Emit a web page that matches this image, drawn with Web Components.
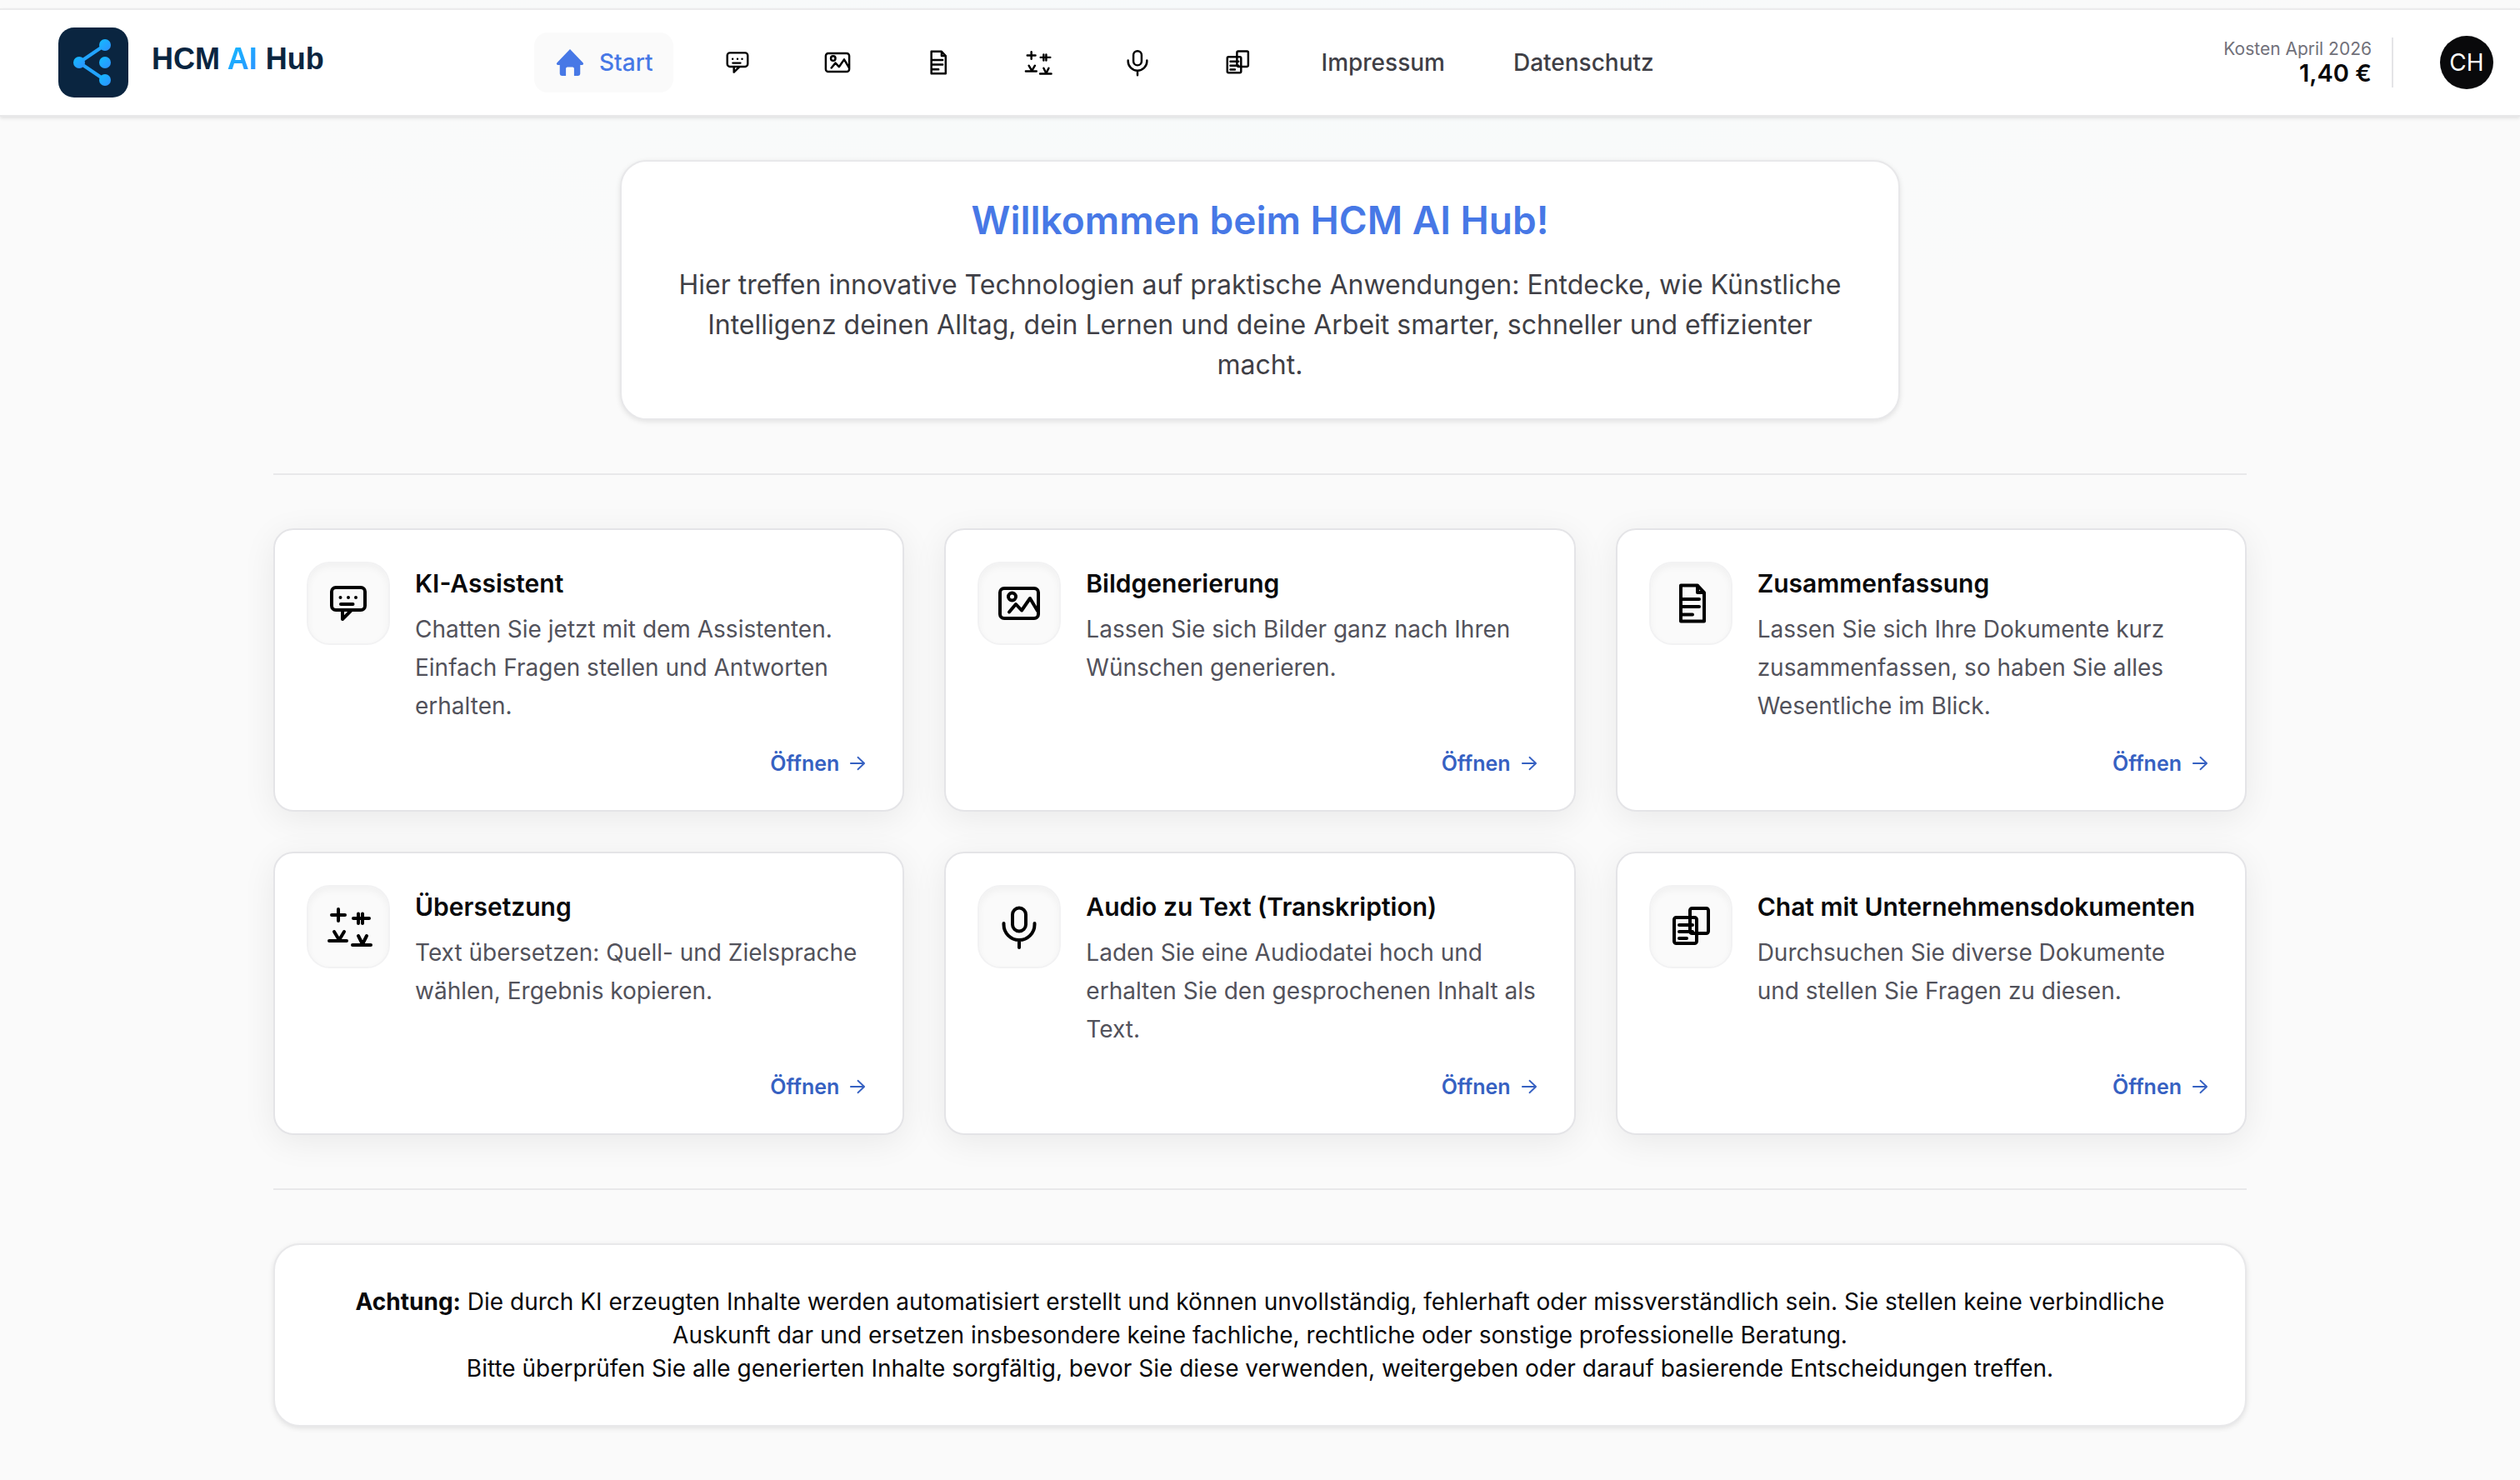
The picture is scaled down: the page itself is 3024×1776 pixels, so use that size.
<!DOCTYPE html>
<html lang="de">
<head>
<meta charset="utf-8">
<title>HCM AI Hub</title>
<style>
  body {
    margin: 0;
    min-height: 100vh;
    box-sizing: border-box;
    padding-top: 10px;
    background: radial-gradient(ellipse 1300px 420px at 50% 0, #f7fafb 0%, #f8fafa 50%, #fafafa 100%) no-repeat #fafafa;
    color: #09090b;
    font-family: Inter, "Liberation Sans", sans-serif;
    font-size: 28px;
  }
</style>
</head>
<body>
<hub-header></hub-header>
<hub-main>
  <hub-welcome>
    <span slot="title">Willkommen beim HCM AI Hub!</span>
    Hier treffen innovative Technologien auf praktische Anwendungen: Entdecke, wie Künstliche Intelligenz deinen Alltag, dein Lernen und deine Arbeit smarter, schneller und effizienter macht.
  </hub-welcome>
  <hub-divider></hub-divider>
  <hub-grid>
    <hub-card icon="chat"><span slot="title">KI-Assistent</span>Chatten Sie jetzt mit dem Assistenten. Einfach Fragen stellen und Antworten erhalten.</hub-card>
    <hub-card icon="image"><span slot="title">Bildgenerierung</span>Lassen Sie sich Bilder ganz nach Ihren Wünschen generieren.</hub-card>
    <hub-card icon="doc"><span slot="title">Zusammenfassung</span>Lassen Sie sich Ihre Dokumente kurz zusammenfassen, so haben Sie alles Wesentliche im Blick.</hub-card>
    <hub-card icon="translate"><span slot="title">Übersetzung</span>Text übersetzen: Quell- und Zielsprache wählen, Ergebnis kopieren.</hub-card>
    <hub-card icon="mic"><span slot="title">Audio zu Text (Transkription)</span>Laden Sie eine Audiodatei hoch und erhalten Sie den gesprochenen Inhalt als Text.</hub-card>
    <hub-card icon="docs"><span slot="title">Chat mit Unternehmensdokumenten</span>Durchsuchen Sie diverse Dokumente und stellen Sie Fragen zu diesen.</hub-card>
  </hub-grid>
  <hub-divider></hub-divider>
  <hub-notice><strong>Achtung:</strong> Die durch KI erzeugten Inhalte werden automatisiert erstellt und können unvollständig, fehlerhaft oder missverständlich sein. Sie stellen keine verbindliche Auskunft dar und ersetzen insbesondere keine fachliche, rechtliche oder sonstige professionelle Beratung.<br>Bitte überprüfen Sie alle generierten Inhalte sorgfältig, bevor Sie diese verwenden, weitergeben oder darauf basierende Entscheidungen treffen.</hub-notice>
</hub-main>

<script>
const ICONS = {
  home: '<path fill="currentColor" stroke="none" d="M0-26 L25 0 Q28 3 24 5 H20 V22 Q20 26 16 26 H8 V12 Q8 9 5 9 H-5 Q-8 9-8 12 V26 H-16 Q-20 26-20 22 V5 H-24 Q-28 3-25 0 Z"/>',
  chat: '<rect x="-20" y="-19" width="40" height="27" rx="5"/><path d="M-7 9 V19 L3 9"/><path d="M-9 1 H5.500"/><g fill="currentColor" stroke="none"><circle cx="-9.500" cy="-7" r="2"/><circle cx="0" cy="-7" r="2"/><circle cx="9" cy="-7" r="2"/></g>',
  image: '<rect x="-23" y="-18" width="46" height="36" rx="5"/><circle cx="-8.500" cy="-8" r="4.500"/><path d="M-12 10.500 L-4 1 L3 8.500 L13-6 L22 9"/>',
  doc: '<path d="M-12-21.500 H8 L16-13 V21.500 H-12 Z"/><path d="M8-21 V-13 H15"/><path d="M-11-5 H10 M-11 4 H10 M-11 13.500 H2"/>',
  translate: '<path d="M-20-14 H-4 M-12-21 V-7 M6-10 H25 M12-15.500 V-4 M17-15.500 V-4"/><path d="M-23 17 H-2 M-17 6 L-11 16 L-5 6 M5 22 H27 M12 11 L17 21 L22 11"/>',
  mic: '<rect x="-8" y="-22.500" width="16" height="28" rx="8"/><path d="M-18.500-4 V-2.500 A18.500 18.500 0 0 0 18.500-2.500 V-4 M0 17 V25"/>',
  docs: '<rect x="-20" y="-11" width="27" height="31" rx="2.500"/><rect x="-1" y="-22" width="22" height="30" rx="2.500"/><path d="M-14-2 H2 M-14 6 H2 M-14 14 H-5"/>',
  arrow: '<path d="M-18 0 H17 M1-16 L18 0 L1 16"/>'
};

function define(name, css, html) {
  customElements.define(name, class extends HTMLElement {
    connectedCallback() {
      if (this.shadowRoot) return;
      const body = typeof html === 'function' ? html(this) : html;
      this.attachShadow({ mode: 'open' }).innerHTML = `<style>*{box-sizing:border-box}${css}</style>${body}`;
    }
  });
}

define('hub-icon',
  ':host{display:block;flex:none;width:38px;height:38px}svg{display:block;width:100%;height:100%;overflow:visible}',
  el => `<svg viewBox="-31 -31 62 62" fill="none" stroke="currentColor" stroke-width="4" stroke-linecap="round" stroke-linejoin="round" aria-hidden="true">${ICONS[el.getAttribute('name')]}</svg>`);

define('hub-nav-link', `
  :host{display:block}
  a{display:flex;align-items:center;gap:16px;height:72px;padding:0 24px;border-radius:16px;color:#3f3f46;font-weight:500;text-decoration:none}
  hub-icon{color:#000}
  :host([active]) a{background:#fafafa;color:#4778e6}
  :host([active]) hub-icon{color:inherit}`,
  el => {
    const icon = el.getAttribute('icon');
    const label = el.getAttribute('label');
    return `<a href="#"${label ? ` aria-label="${label}"` : ''}>${icon ? `<hub-icon name="${icon}"></hub-icon>` : ''}<slot></slot></a>`;
  });

define('hub-logo', `
  :host{display:block}
  a{display:flex;align-items:center;gap:28px;color:#0a2540;text-decoration:none}
  svg{display:block;width:84px;height:84px}
  .name{font:700 36px/42px "Liberation Sans",Arial,sans-serif;padding-bottom:8px}
  .name span{color:#1fa9ff;background:linear-gradient(135deg,#12bdff,#2f8fff);-webkit-background-clip:text;background-clip:text;-webkit-text-fill-color:transparent}`, `
  <a href="#">
    <svg viewBox="0 0 84 84" aria-hidden="true">
      <defs><linearGradient id="g" x1="0" y1="0" x2="1" y2="1"><stop offset="0" stop-color="#12bdff"/><stop offset="1" stop-color="#2f8fff"/></linearGradient></defs>
      <rect width="84" height="84" rx="19" fill="#0a2540"/>
      <path d="M25 42 L56 21 M25 42 L56 63" stroke="#22a4ff" stroke-width="4"/>
      <circle cx="25" cy="42" r="7" fill="url(#g)"/><circle cx="56" cy="21" r="7" fill="url(#g)"/><circle cx="56" cy="42" r="7" fill="url(#g)"/><circle cx="56" cy="63" r="7" fill="url(#g)"/>
    </svg>
    <div class="name">HCM <span>AI</span> Hub</div>
  </a>`);

define('hub-header', `
  :host{display:block}
  header{display:flex;align-items:center;height:130px;padding:0 32px 0 70px;background:#fff;border-top:2px solid #ebebec;border-bottom:2px solid #e8e8e9;box-shadow:0 2px 4px rgba(0,0,0,.1)}
  hub-logo{width:571px}
  nav{display:flex;gap:34px;flex:1}
  .costs{display:flex;flex-direction:column;justify-content:center;height:60px;padding:0 24px 2px 0;border-right:2px solid #e4e4e7;text-align:right;font-size:29px;line-height:30px;font-weight:600}
  .costs small{font-size:21px;line-height:28px;font-weight:400;color:#71717a}
  button{width:64px;height:64px;margin-left:56px;padding:0;border:0;border-radius:50%;background:#09090b;color:#fff;font:400 28px/64px Inter,"Liberation Sans",sans-serif}`, `
  <header>
    <hub-logo></hub-logo>
    <nav>
      <hub-nav-link icon="home" active>Start</hub-nav-link>
      <hub-nav-link icon="chat" label="KI-Assistent"></hub-nav-link>
      <hub-nav-link icon="image" label="Bildgenerierung"></hub-nav-link>
      <hub-nav-link icon="doc" label="Zusammenfassung"></hub-nav-link>
      <hub-nav-link icon="translate" label="Übersetzung"></hub-nav-link>
      <hub-nav-link icon="mic" label="Transkription"></hub-nav-link>
      <hub-nav-link icon="docs" label="Unternehmensdokumente"></hub-nav-link>
      <hub-nav-link>Impressum</hub-nav-link>
      <hub-nav-link>Datenschutz</hub-nav-link>
    </nav>
    <div class="costs"><small>Kosten April 2026</small><span>1,40 €</span></div>
    <button type="button">CH</button>
  </header>`);

define('hub-main', `
  :host{display:block}
  main{display:flex;flex-direction:column;gap:64px;max-width:2368px;margin:0 auto;padding:52px 0 62px}`,
  '<main><slot></slot></main>');

define('hub-divider',
  ':host{display:block}hr{margin:0;border:0;height:2px;background:#e8e8ea}', '<hr>');

define('hub-welcome', `
  :host{display:block;align-self:center;width:100%;max-width:1536px}
  section{padding:40px 64px;border:2px solid #e8e8ea;border-radius:32px;background:#fff;box-shadow:0 2px 6px rgba(0,0,0,.1);text-align:center}
  h1{margin:0 0 24px;font-size:46px;line-height:60px;font-weight:600;color:#4778e6}
  p{margin:0;font-size:32px;line-height:48px;color:#3f3f46}`,
  '<section><h1><slot name="title"></slot></h1><p><slot></slot></p></section>');

define('hub-grid',
  ':host{display:grid;grid-template-columns:repeat(3,minmax(0,1fr));grid-auto-rows:1fr;gap:48px}', '<slot></slot>');

define('hub-card', `
  :host{display:block}
  article{display:flex;gap:30px;height:100%;padding:38px;border:2px solid #e4e4e7;border-radius:24px;background:#fff;box-shadow:0 8px 40px rgba(0,0,0,.07)}
  .tile{display:flex;align-items:center;justify-content:center;flex:none;width:100px;height:100px;border:2px solid #f2f2f3;border-radius:28px;background:#fafafa;box-shadow:inset 0 4px 8px rgba(0,0,0,.04);color:#000}
  .tile hub-icon{width:62px;height:62px}
  .text{display:flex;flex-direction:column;flex:1;min-width:0;padding:6px 2px 0 0}
  h2{margin:0 0 12px;font-size:30px;line-height:40px;font-weight:600}
  p{margin:0 0 28px;font-size:28px;line-height:46px;color:#52525b}
  a{display:flex;align-items:center;gap:8px;align-self:flex-end;margin-top:auto;font-size:25px;line-height:36px;font-weight:600;color:#3661c2;text-decoration:none}
  a hub-icon{width:28px;height:28px}`,
  el => `<article><div class="tile"><hub-icon name="${el.getAttribute('icon')}"></hub-icon></div><div class="text"><h2><slot name="title"></slot></h2><p><slot></slot></p><a href="#">Öffnen<hub-icon name="arrow"></hub-icon></a></div></article>`);

define('hub-notice', `
  :host{display:block}
  aside{padding:48px 64px;border:2px solid #e8e8ea;border-radius:32px;background:#fff;box-shadow:0 2px 6px rgba(0,0,0,.1);text-align:center;font-size:28px;line-height:40px}
  ::slotted(strong){font-weight:700}`,
  '<aside><slot></slot></aside>');
</script>
</body>
</html>
